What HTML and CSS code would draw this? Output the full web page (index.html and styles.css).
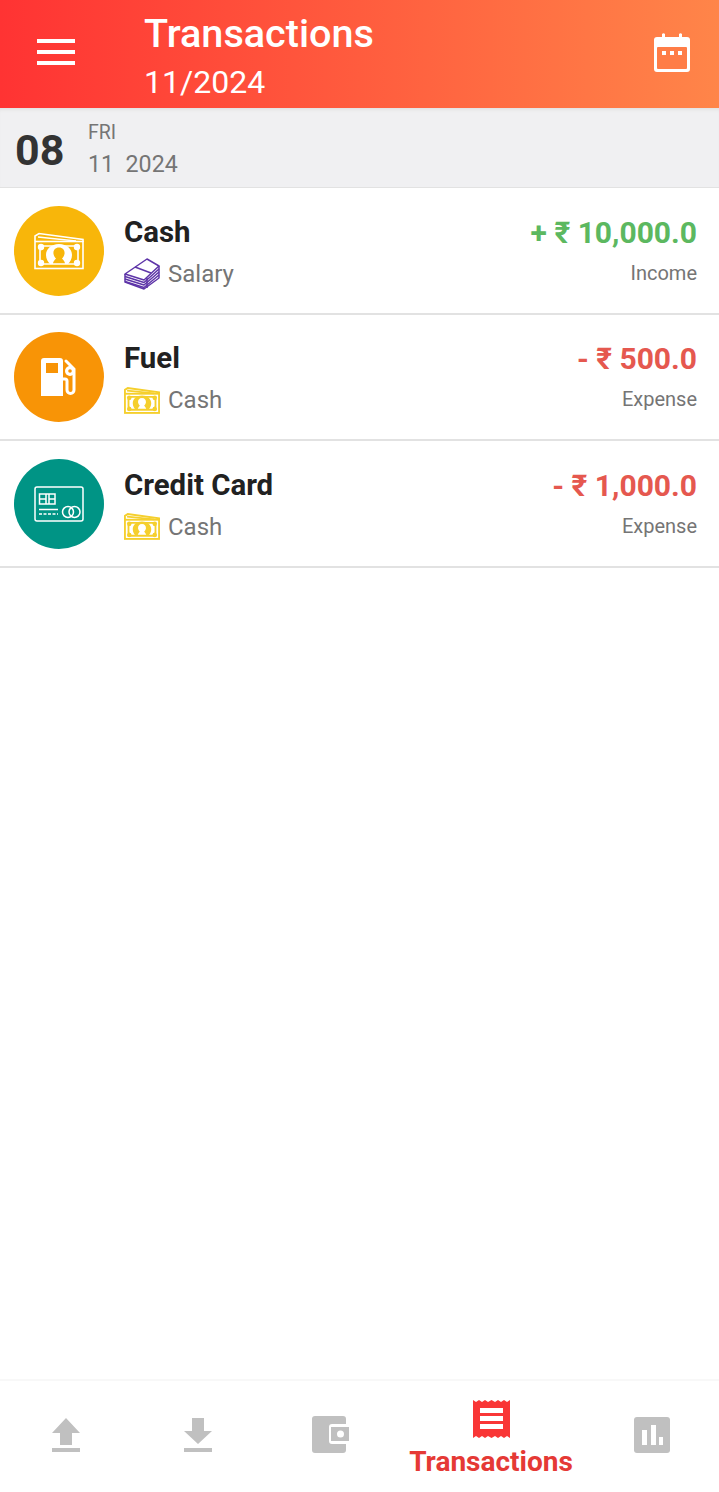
FILE: index.html
```html
<!DOCTYPE html>
<html lang="en">
<head>
    <meta charset="UTF-8">
    <meta name="viewport" content="width=device-width, initial-scale=1.0">
    <title>Transactions</title>
    <link rel="stylesheet" href="styles.css">
</head>
<body>

<svg class="defs" width="0" height="0">
    <symbol id="bill" viewBox="0 0 50 38">
        <g class="bill-lines" fill="none" stroke="currentColor">
            <path d="M1 9 L1 4 L5 1.500 L49 7.500 V10"/>
            <path d="M4 5 L42 9"/>
            <rect x="1" y="9.500" width="48" height="27"/>
            <path d="M9 14 H41 Q41 17 44 18 V28 Q41 29 41 32 H9 Q9 29 6 28 V18 Q9 17 9 14 Z"/>
        </g>
        <g fill="currentColor">
            <circle cx="7" cy="15" r="3.200"/>
            <circle cx="43" cy="15" r="3.200"/>
            <circle cx="7" cy="31" r="3.200"/>
            <circle cx="43" cy="31" r="3.200"/>
            <path fill-rule="evenodd" d="M25 12 C17 12 12 17 12 23 C12 27 14 30 16 32 H34 C36 30 38 27 38 23 C38 17 33 12 25 12 Z M25 15.500 C21 15.500 19 18.500 19.500 22 C20 24 21 25.500 22 26.500 C20.500 28 19 29.500 19 32 H31 C31 29.500 29.500 28 28 26.500 C29 25.500 30 24 30.500 22 C31 18.500 29 15.500 25 15.500 Z"/>
        </g>
    </symbol>
    <symbol id="stack" viewBox="0 0 36 32">
        <g fill="none" stroke="currentColor" stroke-width="1.500" stroke-linejoin="round">
            <path d="M1 16 L23 1 L35 8 L20 22 Z"/>
            <path d="M1 16 V24 L20 31 L35 20 V8"/>
            <path d="M1 18.500 L20 24.500 L35 11 M1 21 L20 27 L35 14 M1 23.500 L20 29.500 L35 17"/>
            <path d="M11 9 L27 15 M23 20 V30"/>
        </g>
    </symbol>
</svg>

<div class="app">
    <header class="topbar">
        <div class="menu"><span></span><span></span><span></span></div>
        <div class="topbar-text">
            <div class="topbar-title">Transactions</div>
            <div class="topbar-month">11/2024</div>
        </div>
        <svg class="cal-icon" viewBox="0 0 38 40">
            <path fill="#fff" d="M9 1 a2 2 0 0 1 3 0 V4 H26 V1 a2 2 0 0 1 3 0 V4 H34 a3 3 0 0 1 3 3 V36 a3 3 0 0 1 -3 3 H4 a3 3 0 0 1 -3 -3 V7 a3 3 0 0 1 3 -3 H9 Z"/>
            <rect x="4" y="14" width="30" height="22" rx="1" fill="#ff7d47"/>
            <rect x="9" y="18" width="4" height="4" fill="#fff"/>
            <rect x="17" y="18" width="4" height="4" fill="#fff"/>
            <rect x="25" y="18" width="4" height="4" fill="#fff"/>
        </svg>
    </header>

    <div class="day">
        <div class="day-num">08</div>
        <div class="day-info">
            <div class="day-name">FRI</div>
            <div class="day-month">11&nbsp; 2024</div>
        </div>
    </div>

    <main class="list">
        <div class="row">
            <div class="circle yellow">
                <svg class="big-bill"><use href="#bill"/></svg>
            </div>
            <div class="row-main">
                <div class="row-title">Cash</div>
                <div class="row-sub">
                    <svg class="sub-stack"><use href="#stack"/></svg>
                    <span>Salary</span>
                </div>
            </div>
            <div class="row-right">
                <div class="amount green">+ ₹ 10,000.0</div>
                <div class="kind">Income</div>
            </div>
        </div>

        <div class="row">
            <div class="circle orange">
                <svg class="fuel" viewBox="0 0 36 38">
                    <path fill="#fff" fill-rule="evenodd" d="M3 0 H19 a3 3 0 0 1 3 3 V38 H0 V3 a3 3 0 0 1 3 -3 Z M5 5 V15 H17 V5 Z"/>
                    <path fill="none" stroke="#fff" stroke-width="3" stroke-linecap="round" d="M22 21 H24 a2 2 0 0 1 2 2 V32 a3.500 3.500 0 0 0 7 0 V11 L25 3"/>
                    <circle cx="29" cy="13" r="5" fill="#fff"/>
                    <circle cx="29" cy="13" r="1.800" fill="#f89406"/>
                </svg>
            </div>
            <div class="row-main">
                <div class="row-title">Fuel</div>
                <div class="row-sub">
                    <svg class="sub-bill"><use href="#bill"/></svg>
                    <span>Cash</span>
                </div>
            </div>
            <div class="row-right">
                <div class="amount red">- ₹ 500.0</div>
                <div class="kind">Expense</div>
            </div>
        </div>

        <div class="row">
            <div class="circle teal">
                <svg class="card" viewBox="0 0 50 36">
                    <g fill="none" stroke="#fff" stroke-width="1.500">
                        <rect x="1" y="1" width="48" height="34" rx="2"/>
                        <rect x="5.500" y="8" width="15.500" height="10"/>
                        <path d="M12 8 V18 M5.500 13 H12 M15 8 V18 M15 13 H21"/>
                        <path d="M5 23.500 H24"/>
                        <path d="M5 28 H24" stroke-dasharray="3 1.500"/>
                        <circle cx="34" cy="26" r="5.500"/>
                        <circle cx="40.500" cy="26" r="5.500"/>
                    </g>
                </svg>
            </div>
            <div class="row-main">
                <div class="row-title">Credit Card</div>
                <div class="row-sub">
                    <svg class="sub-bill"><use href="#bill"/></svg>
                    <span>Cash</span>
                </div>
            </div>
            <div class="row-right">
                <div class="amount red">- ₹ 1,000.0</div>
                <div class="kind">Expense</div>
            </div>
        </div>
    </main>

    <nav class="tabs">
        <div class="tab">
            <svg class="tab-icon" viewBox="0 0 28 34">
                <path fill="#c0c0c0" d="M14 0 L28 15 H20 V27 H8 V15 H0 Z"/>
                <rect y="30" width="28" height="4" fill="#c0c0c0"/>
            </svg>
        </div>
        <div class="tab">
            <svg class="tab-icon" viewBox="0 0 28 34">
                <path fill="#c0c0c0" d="M8 0 H20 V13 H28 L14 26 L0 13 H8 Z"/>
                <rect y="30" width="28" height="4" fill="#c0c0c0"/>
            </svg>
        </div>
        <div class="tab">
            <svg class="tab-icon wallet" viewBox="0 0 38 37">
                <path fill="#c0c0c0" d="M4 0 H32 a3 3 0 0 1 3 3 V8 H21 a3 3 0 0 0 -3 3 V25 a3 3 0 0 0 3 3 H35 V34 a3 3 0 0 1 -3 3 H4 a3 3 0 0 1 -3 -3 V3 a3 3 0 0 1 3 -3 Z"/>
                <path fill="#c0c0c0" fill-rule="evenodd" d="M20 11 H38 V25 H20 Z M26 18 a3.500 3.500 0 1 0 7 0 a3.500 3.500 0 1 0 -7 0 Z"/>
            </svg>
        </div>
        <div class="tab active">
            <svg class="tab-icon receipt" viewBox="0 0 37 40">
                <path fill="#f93636" d="M0 1 L3 3 L6 1 L9 3 L12 1 L15 3 L18.500 1 L22 3 L25 1 L28 3 L31 1 L34 3 L37 1 V39 L34 37 L31 39 L28 37 L25 39 L22 37 L18.500 39 L15 37 L12 39 L9 37 L6 39 L3 37 L0 39 Z"/>
                <rect x="7" y="9" width="23" height="5" fill="#fff"/>
                <rect x="7" y="17" width="23" height="5" fill="#fff"/>
                <rect x="7" y="25" width="23" height="5" fill="#fff"/>
            </svg>
            <div class="tab-label">Transactions</div>
        </div>
        <div class="tab">
            <svg class="tab-icon chart" viewBox="0 0 36 36">
                <rect width="36" height="36" rx="3" fill="#c0c0c0"/>
                <rect x="8" y="13" width="5" height="15" fill="#fff"/>
                <rect x="17" y="8" width="5" height="20" fill="#fff"/>
                <rect x="25" y="20" width="4" height="8" fill="#fff"/>
            </svg>
        </div>
    </nav>
</div>

</body>
</html>
```

FILE: styles.css
```css
* {
    box-sizing: border-box;
}
body {
    margin: 0;
    font-family: Roboto, Arial, sans-serif;
    background-color: white;
}
.defs {
    display: block;
    height: 0;
}
.bill-lines {
    stroke-width: var(--bill-stroke, 1.6);
}
.app {
    display: flex;
    flex-direction: column;
    height: 1492px;
}
.topbar {
    display: flex;
    align-items: center;
    height: 108px;
    padding: 0 28px 0 37px;
    background: linear-gradient(90deg, #ff3333 0%, #ff8549 100%);
    color: white;
}
.menu {
    display: flex;
    flex-direction: column;
    gap: 7px;
    width: 38px;
    margin: -4px 69px 0 0;
}
.menu span {
    display: block;
    height: 4px;
    background-color: white;
}
.topbar-text {
    flex: 1;
    padding-top: 5px;
}
.topbar-title {
    font-size: 39.600px;
    font-weight: 500;
    line-height: 44px;
}
.topbar-month {
    font-size: 32px;
    line-height: 38px;
    margin-top: 7px;
}
.cal-icon {
    width: 38px;
    height: 40px;
    margin-top: -3px;
}
.day {
    display: flex;
    align-items: center;
    height: 80px;
    padding: 5px 15px 0;
    background-color: #f0f0f2;
    border-bottom: 1px solid #e2e2e2;
    box-shadow: inset 0 4px 4px -3px #dcdcdc;
}
.day-num {
    width: 73px;
    font-size: 43px;
    font-weight: 700;
    color: #333333;
}
.day-name {
    font-size: 19.500px;
    line-height: 22px;
    color: #757575;
}
.day-month {
    font-size: 23.200px;
    line-height: 30px;
    margin-top: 5px;
    color: #757575;
}
.list {
    flex: 1;
}
.row {
    display: flex;
    align-items: center;
    height: 126.500px;
    padding: 1px 22px 0 14px;
    border-bottom: 2px solid #e2e2e2;
}
.circle {
    display: flex;
    align-items: center;
    justify-content: center;
    width: 90px;
    height: 90px;
    border-radius: 50%;
    color: white;
}
.yellow {
    background-color: #f8b60a;
}
.orange {
    background-color: #f89406;
}
.teal {
    background-color: #009485;
}
.big-bill {
    width: 50px;
    height: 38px;
}
.fuel {
    width: 36px;
    height: 38px;
}
.card {
    width: 50px;
    height: 36px;
}
.row-main {
    flex: 1;
    margin-left: 20px;
    padding-top: 2px;
}
.row-title {
    font-size: 29.400px;
    font-weight: 700;
    line-height: 36px;
    color: #212121;
}
.row-sub {
    display: flex;
    align-items: center;
    gap: 8px;
    margin-top: 8px;
    font-size: 24px;
    line-height: 32px;
    color: #757575;
}
.sub-stack {
    width: 36px;
    height: 32px;
    color: #5e35a8;
}
.sub-bill {
    --bill-stroke: 2.6;
    width: 36px;
    height: 27px;
    color: #f5cf2c;
}
.row-right {
    padding-top: 1px;
    text-align: right;
}
.amount {
    font-size: 30px;
    font-weight: 700;
    line-height: 36px;
}
.green {
    color: #5cb860;
}
.red {
    color: #e5584f;
}
.kind {
    margin-top: 7px;
    font-size: 20px;
    line-height: 30px;
    color: #757575;
}
.tabs {
    display: flex;
    height: 113px;
    border-top: 2px solid #f8f8f8;
}
.tab {
    display: flex;
    flex-direction: column;
    align-items: center;
    justify-content: center;
    width: 132px;
    padding-bottom: 4px;
}
.tab.active {
    width: 190px;
    padding: 4px 0 0;
}
.tab-icon {
    width: 28px;
    height: 34px;
}
.wallet {
    width: 38px;
    height: 37px;
}
.receipt {
    width: 37px;
    height: 40px;
}
.chart {
    width: 36px;
    height: 36px;
}
.tab-label {
    margin-top: 7px;
    font-size: 28px;
    font-weight: 700;
    line-height: 32px;
    color: #e53935;
}
```
